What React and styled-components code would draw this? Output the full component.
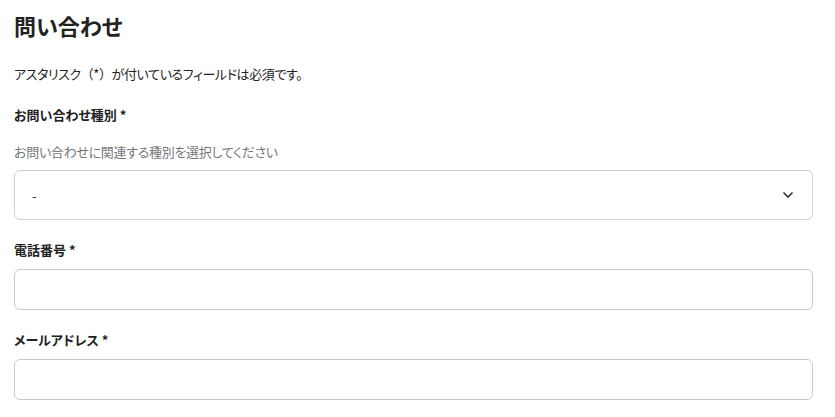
import React from "react";
import styled, { createGlobalStyle } from "styled-components";

const GlobalStyle = createGlobalStyle`
  body {
    margin: 0;
    background: #fff;
    font-family: "Noto Sans CJK JP", "Noto Sans", sans-serif;
    color: #222;
  }
`;

export default function App() {
  return (
    <>
      <GlobalStyle />
      <Page>
        <Title>問い合わせ</Title>
        <Note>
          アスタリスク<Wide>（*）</Wide>が付いているフィールドは必須です。
        </Note>

        <Field>
          <Label>お問い合わせ種別 *</Label>
          <Hint>お問い合わせに関連する種別を選択してください</Hint>
          <SelectBox>
            <span>-</span>
            <svg width="12" height="8" viewBox="0 0 12 8">
              <path d="M1.5 1.5 L6 6 L10.5 1.5" fill="none" stroke="#333" strokeWidth="1.6" />
            </svg>
          </SelectBox>
        </Field>

        <Field>
          <Label>電話番号 *</Label>
          <Input type="text" />
        </Field>

        <Field>
          <Label>メールアドレス *</Label>
          <Input type="text" />
        </Field>
      </Page>
    </>
  );
}

const Page = styled.div`
  padding: 10px 22px 0 14px;
  font-feature-settings: "palt";
`;

const Title = styled.h1`
  margin: 0 0 24px;
  font-size: 22px;
  line-height: 30px;
  font-weight: 700;
  color: #222;
`;

const Note = styled.p`
  margin: 0 0 21px;
  font-size: 13px;
  line-height: 20px;
  letter-spacing: -0.4px;
`;

const Wide = styled.span`
  font-feature-settings: normal;
`;

const Field = styled.div`
  display: flex;
  flex-direction: column;
  margin-bottom: 20px;
`;

const Label = styled.label`
  font-size: 13px;
  line-height: 20px;
  font-weight: 700;
  margin-bottom: 9px;
`;

const Hint = styled.div`
  font-size: 13px;
  line-height: 20px;
  color: #777;
  letter-spacing: -0.3px;
  margin-top: 8px;
  margin-bottom: 8px;
`;

const SelectBox = styled.div`
  box-sizing: border-box;
  height: 50px;
  border: 1px solid #d0d0d0;
  border-radius: 6px;
  display: flex;
  align-items: center;
  justify-content: space-between;
  padding: 0 18px 0 17px;
  font-size: 13px;
  color: #333;
`;

const Input = styled.input`
  box-sizing: border-box;
  height: 41px;
  border: 1px solid #c8c8c8;
  border-radius: 6px;
  font-size: 13px;
  padding: 0 12px;
  outline: none;
`;
